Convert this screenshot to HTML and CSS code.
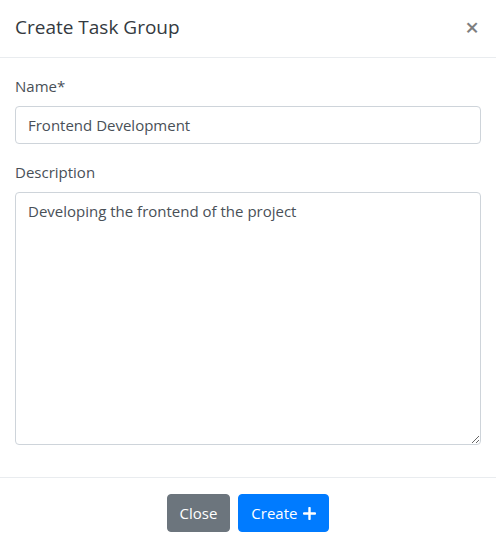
FILE: index.html
```html
<!DOCTYPE html>
<html lang="en">
<head>
<meta charset="utf-8">
<title>Create Task Group</title>
<link rel="stylesheet" href="styles.css">
</head>
<body>
<div class="modal">
  <div class="modal-header">
    <h5 class="modal-title">Create Task Group</h5>
    <button class="close" type="button" aria-label="Close">&times;</button>
  </div>
  <div class="modal-body">
    <div class="form-group">
      <label for="name">Name*</label>
      <input id="name" class="form-control" type="text" value="Frontend Development">
    </div>
    <div class="form-group">
      <label for="desc">Description</label>
      <textarea id="desc" class="form-control textarea">Developing the frontend of the project</textarea>
    </div>
  </div>
  <div class="modal-footer">
    <button class="btn btn-secondary" type="button">Close</button>
    <button class="btn btn-primary" type="button">Create
      <svg class="plus" width="13" height="13" viewBox="0 0 13 13" aria-hidden="true"><path d="M6.5 1v11M1 6.5h11" stroke="#fff" stroke-width="2.4" stroke-linecap="round"/></svg>
    </button>
  </div>
</div>
</body>
</html>
```

FILE: styles.css
```css
* { box-sizing: border-box; }
html, body { margin: 0; padding: 0; background: #fff; }
body {
  font-family: "Open Sans", "Noto Sans", sans-serif;
  font-size: 15px;
  line-height: 1.5;
  color: #212529;
}
.modal { width: 496px; background: #fff; }
.modal-header {
  display: flex;
  align-items: center;
  justify-content: space-between;
  padding: 12px 15px 15px 15px;
  border-bottom: 1px solid #e9ecef;
}
.modal-title {
  margin: 0;
  font-size: 19px;
  font-weight: 400;
  line-height: 30px;
  color: #343a40;
}
.close {
  border: 0;
  background: transparent;
  padding: 0;
  margin-right: 2px;
  font-family: "Open Sans", sans-serif;
  font-size: 24px;
  font-weight: 600;
  line-height: 30px;
  color: #000;
  opacity: .5;
  cursor: pointer;
}
.modal-body { padding: 16px 15px; }
.form-group { margin-bottom: 16px; }
label { display: block; margin-bottom: 8px; line-height: 24px; color: #495057; }
.form-control {
  display: block;
  width: 100%;
  height: 38px;
  padding: 6px 12px;
  font-family: inherit;
  font-size: 15px;
  line-height: 24px;
  color: #495057;
  background: #fff;
  border: 1px solid #ced4da;
  border-radius: 4px;
  outline: none;
}
.textarea { height: 253px; resize: both; }
.modal-footer {
  display: flex;
  justify-content: center;
  gap: 8px;
  padding: 16px 12px 12px;
  border-top: 1px solid #e9ecef;
}
.btn {
  display: inline-flex;
  align-items: center;
  gap: 6px;
  height: 38px;
  padding: 6px 12px;
  font-family: inherit;
  font-size: 15px;
  line-height: 24px;
  color: #fff;
  border: 1px solid transparent;
  border-radius: 4px;
  cursor: pointer;
}
.btn-secondary { background: #6c757d; border-color: #6c757d; }
.btn-primary { background: #007bff; border-color: #007bff; }
.plus { display: block; }
```
